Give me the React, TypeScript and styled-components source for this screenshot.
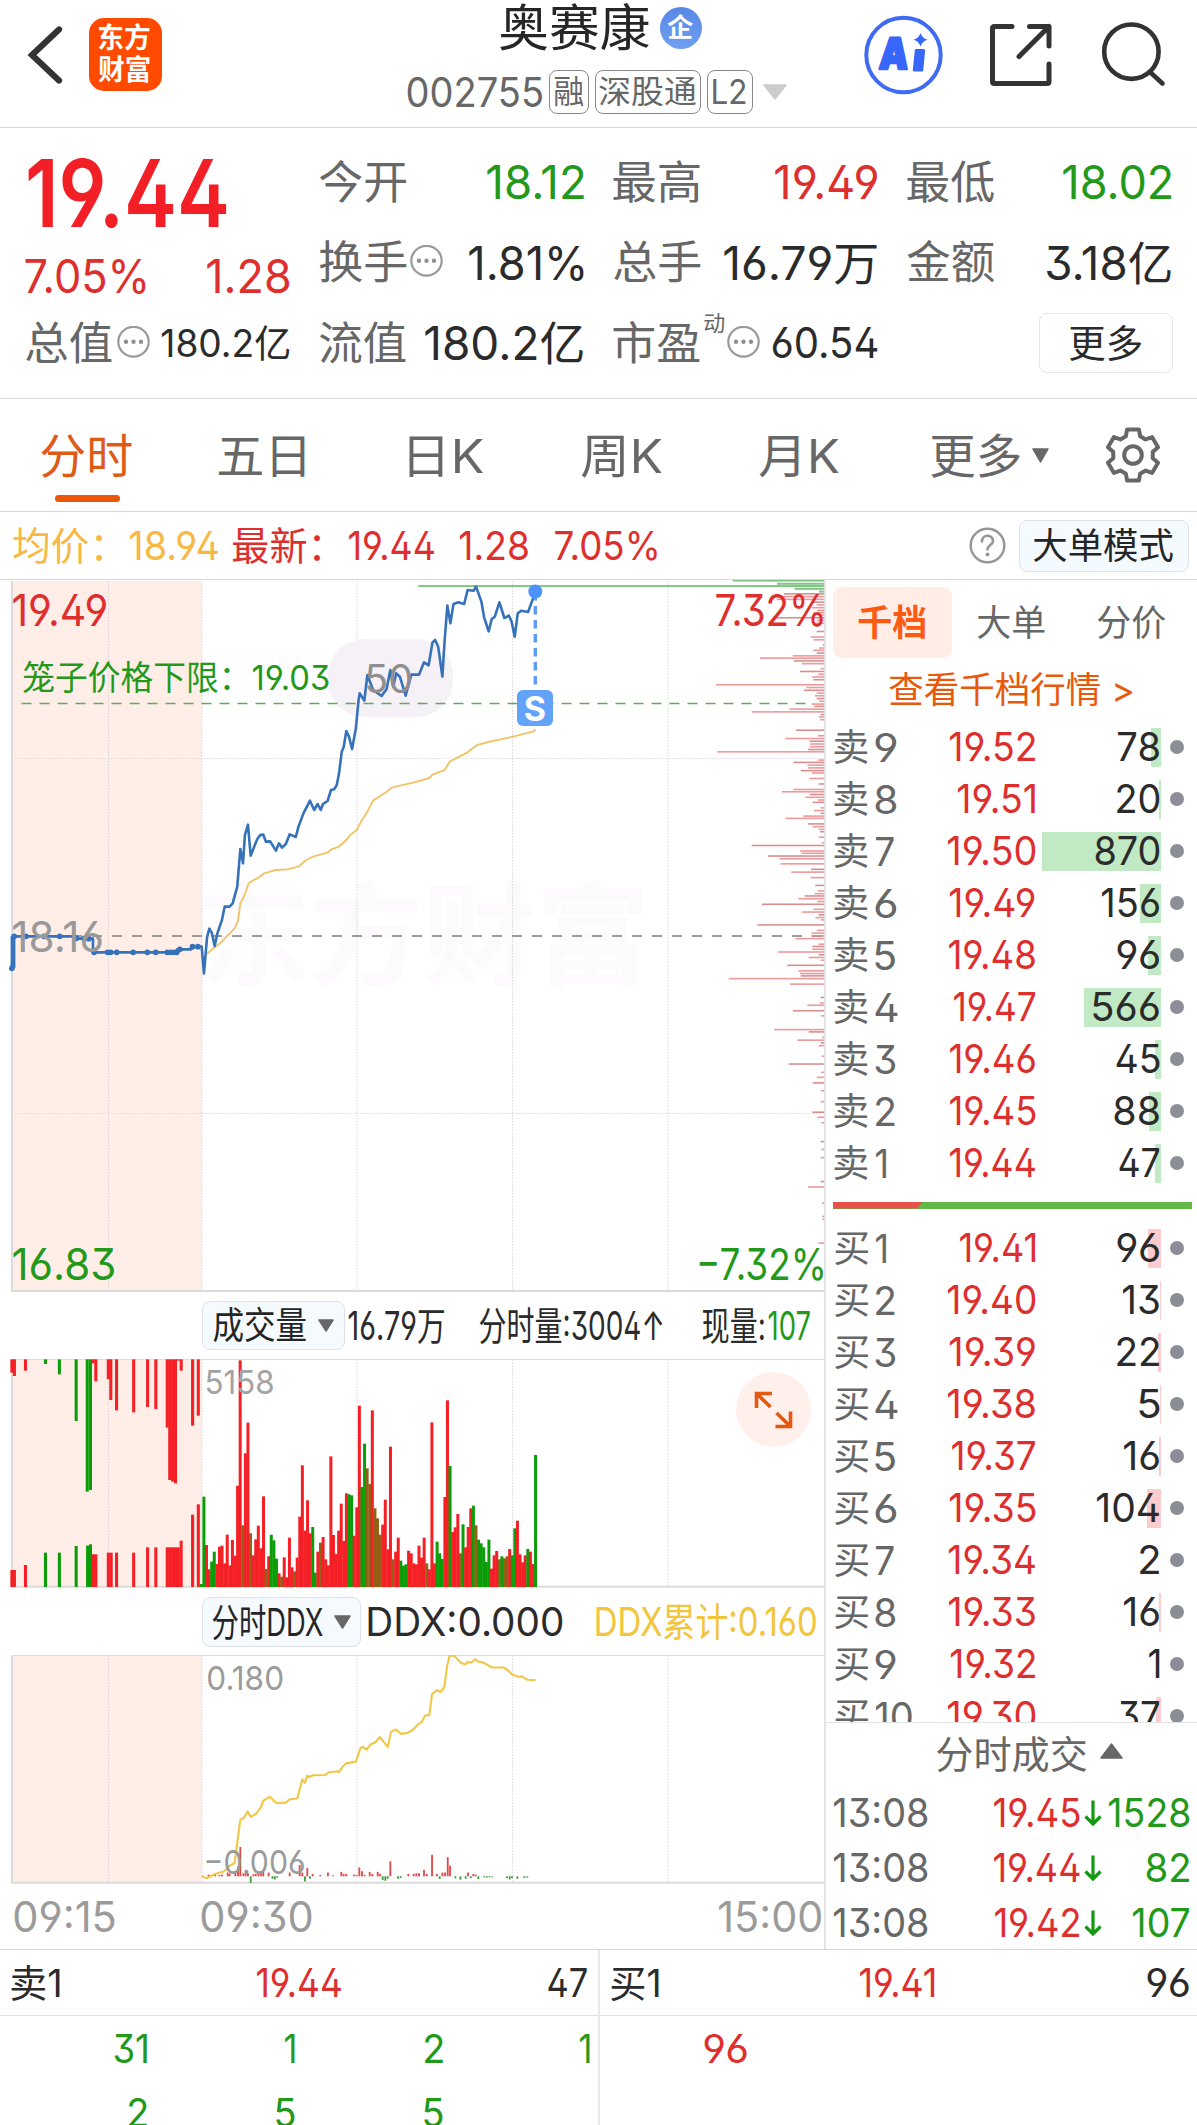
import React, { useLayoutEffect, useRef, useState } from 'react';
import styled, { createGlobalStyle, css } from 'styled-components';

const FONT = 'Inter, "Noto Sans CJK SC", sans-serif';
const C = {
  red: '#de2f2f',
  green: '#22991a',
  text: '#2b2b2b',
  sub: '#666766',
  mute: '#9b9b9b',
  line: '#d6d7d9',
  orange: '#e8590c',
  blue: '#3672ba',
  pink: '#ffeee7',
};

const Global = createGlobalStyle`
  * { box-sizing: border-box; }
  html, body { margin: 0; padding: 0; background: #fff; }
  body { font-family: ${FONT}; width: 1197px; height: 2125px; overflow: hidden; }
`;

/* ---------- text fitted to a fixed ink width ---------- */
const FitBox = styled.span<{ $w: number; $size: number; $ml: number; $color?: string; $weight: number }>`
  display: block;
  flex: none;
  width: ${p => p.$w}px;
  height: ${p => p.$size}px;
  margin-left: ${p => p.$ml}px;
  font-family: ${FONT};
  font-size: ${p => p.$size}px;
  line-height: ${p => p.$size}px;
  font-weight: ${p => p.$weight};
  font-feature-settings: 'ss01' 1;
  text-align: left;
  ${p => p.$color && css`color: ${p.$color};`}
`;
const FitInner = styled.span`
  display: inline-block;
  white-space: nowrap;
  transform-origin: 0 0;
  vertical-align: top;
`;

let ctx: CanvasRenderingContext2D | null = null;
function inkOf(text: string, size: number, weight: number) {
  if (!ctx) ctx = document.createElement('canvas').getContext('2d');
  if (!ctx) return { left: 0, width: text.length * size * 0.6, advance: text.length * size * 0.6 };
  ctx.font = `${weight} ${size}px ${FONT}`;
  const m = ctx.measureText(text);
  return {
    left: -m.actualBoundingBoxLeft,
    width: m.actualBoundingBoxRight + m.actualBoundingBoxLeft,
    advance: m.width,
  };
}

type FitProps = { t: string; w: number; s: number; ml?: number; c?: string; b?: number };
function Fit({ t, w, s, ml = 0, c, b = 400 }: FitProps) {
  const ref = useRef<HTMLSpanElement>(null);
  const [fit, setFit] = useState({ k: 1, dx: 0 });
  useLayoutEffect(() => {
    const el = ref.current;
    if (!el) return;
    const ink = inkOf(t, s, b);
    const kept = el.style.transform;
    el.style.transform = 'none';
    const advance = el.getBoundingClientRect().width;
    el.style.transform = kept;
    /* alternate digits change the advance, so the ink width follows it */
    const k = w / (ink.width + advance - ink.advance);
    setFit({ k, dx: -ink.left * k - 0.7 });
  }, [t, w, s, b]);
  return (
    <FitBox $w={w} $size={s} $ml={ml} $color={c} $weight={b}>
      <FitInner ref={ref} style={{ transform: `translateX(${fit.dx.toFixed(2)}px) scaleX(${fit.k.toFixed(4)})` }}>{t}</FitInner>
    </FitBox>
  );
}

/* ---------- page ---------- */
const Page = styled.div`
  width: 1197px;
  height: 2125px;
  overflow: hidden;
  background: #fff;
  color: ${C.text};
  display: flex;
  flex-direction: column;
`;

/* ---------- header ---------- */
const Header = styled.header`
  display: flex;
  flex: none;
  height: 128px;
  border-bottom: 1px solid ${C.line};
`;
const Icon = styled.svg<{ $ml?: number; $mt?: number }>`
  display: block;
  flex: none;
  margin-left: ${p => p.$ml ?? 0}px;
  margin-top: ${p => p.$mt ?? 0}px;
`;
const Logo = styled.div`
  width: 73px;
  height: 73px;
  margin: 18px 0 0 23px;
  padding: 6px 0 0 10px;
  border-radius: 15px;
  background: #ff4a00;
  display: flex;
  flex-direction: column;
  gap: 4px;
`;
const Identity = styled.div`
  width: 382px;
  margin-left: 245px;
  display: flex;
  flex-direction: column;
`;
const NameRow = styled.div`
  display: flex;
  align-items: center;
  height: 56px;
`;
const Verified = styled.div`
  width: 42px;
  height: 42px;
  margin-left: 10px;
  border-radius: 50%;
  background: linear-gradient(#5687e6, #709ff1);
  display: flex;
  align-items: center;
  justify-content: center;
`;
const CodeRow = styled.div`
  display: flex;
  align-items: center;
  height: 44px;
  margin-top: 14px;
  color: ${C.sub};
`;
const Tag = styled.div<{ $w: number }>`
  width: ${p => p.$w}px;
  height: 44px;
  margin-left: 6px;
  border: 1.5px solid #8d8888;
  border-radius: 8px;
  display: flex;
  align-items: center;
  justify-content: center;
`;

/* ---------- quote ---------- */
const Quote = styled.section`
  display: grid;
  flex: none;
  grid-template-columns: repeat(4, 264px);
  grid-template-rows: repeat(3, 80.5px);
  column-gap: 30px;
  height: 271px;
  padding: 14px 0 0 26.4px;
  border-bottom: 1px solid ${C.line};
`;
const Lead = styled.div`
  grid-row: span 2;
  padding-top: 5px;
  display: flex;
  flex-direction: column;
  gap: 12px;
`;
const Spread = styled.div`
  display: flex;
  justify-content: space-between;
`;
const Stat = styled.div`
  display: flex;
  align-items: center;
`;
const Push = styled.div`
  margin-left: auto;
`;
const Sup = styled.div`
  align-self: flex-start;
  margin: 9px 0 0 4px;
`;
const MoreButton = styled.button`
  width: 134px;
  height: 60px;
  margin: 0 -0.6px 0 auto;
  padding: 0;
  border: 1.5px solid #e6e6e8;
  border-radius: 8px;
  background: #fff;
  display: flex;
  align-items: center;
  justify-content: center;
`;

/* ---------- tabs ---------- */
const Tabs = styled.nav`
  display: flex;
  flex: none;
  height: 113px;
  align-items: center;
  border-bottom: 1px solid ${C.line};
  color: ${C.sub};
`;
const ActiveTab = styled.div`
  height: 112px;
  margin-left: 42px;
  padding-top: 32.5px;
  display: flex;
  flex-direction: column;
  align-items: center;
  gap: 16px;
`;
const Underline = styled.div`
  width: 65px;
  height: 7px;
  border-radius: 4px;
  background: #ea560b;
`;
const InfoBar = styled.div`
  display: flex;
  flex: none;
  align-items: center;
  height: 68px;
  border-bottom: 1px solid ${C.line};
`;
const Pill = styled.button<{ $w: number; $h: number; $ml: number; $pl: number }>`
  width: ${p => p.$w}px;
  height: ${p => p.$h}px;
  margin: 0 0 0 ${p => p.$ml}px;
  padding: 0 0 0 ${p => p.$pl}px;
  border: 1.5px solid #dfe2ea;
  border-radius: 8px;
  background: #f5faff;
  color: #252525;
  display: flex;
  flex: none;
  align-items: center;
`;

/* ---------- body ---------- */
const Body = styled.main`
  display: flex;
  flex: none;
  height: 1370px;
  border-bottom: 1px solid ${C.line};
`;
const ChartColumn = styled.div`
  width: 826px;
  flex: none;
  border-right: 2px solid #e4e4e8;
  display: flex;
  flex-direction: column;
`;
const ChartBox = styled.div<{ $h: number }>`
  position: relative;
  flex: none;
  height: ${p => p.$h}px;
`;
const Plot = styled.svg`
  display: block;
`;
const Overlay = styled.div<{ $x: number; $y: number }>`
  position: absolute;
  left: ${p => p.$x}px;
  top: ${p => p.$y}px;
`;
const IndicatorBar = styled.div<{ $h: number }>`
  display: flex;
  flex: none;
  align-items: center;
  height: ${p => p.$h}px;
`;
const Expand = styled.button`
  position: absolute;
  left: 736px;
  top: 13px;
  width: 75px;
  height: 75px;
  padding: 0;
  border: 0;
  border-radius: 50%;
  background: #fff0eb;
`;
const TimeAxis = styled.div`
  display: flex;
  flex: 1;
  align-items: center;
  color: ${C.mute};
`;

/* ---------- order book ---------- */
const Book = styled.aside`
  width: 371px;
  display: flex;
  flex-direction: column;
`;
const BookTabs = styled.div`
  display: flex;
  flex: none;
  align-items: center;
  height: 71px;
  margin-top: 7px;
  padding-left: 7px;
  color: ${C.sub};
`;
const BookTabOn = styled.div`
  width: 119px;
  height: 71px;
  border-radius: 9px;
  background: #ffede6;
  display: flex;
  align-items: center;
  justify-content: center;
`;
const DepthLink = styled.div`
  display: flex;
  flex: none;
  align-items: center;
  height: 63px;
  padding-left: 63.5px;
`;
const Levels = styled.div<{ $h: number }>`
  flex: none;
  height: ${p => p.$h}px;
  overflow: hidden;
`;
const Level = styled.div`
  display: grid;
  grid-template-columns: 100px 100.5px 125.5px 1fr;
  align-items: center;
  height: 52px;
  padding-left: 9px;
`;
const LevelName = styled.div`
  display: flex;
  align-items: center;
  color: ${C.sub};
`;
const Right = styled.div`
  display: flex;
  justify-content: flex-end;
`;
const Amount = styled.div<{ $bar: number; $tone: string }>`
  display: flex;
  align-items: center;
  justify-content: flex-end;
  height: 39px;
  padding-right: 1px;
  background: linear-gradient(${p => p.$tone}, ${p => p.$tone}) right / ${p => p.$bar}px 100% no-repeat;
`;
const Dot = styled.div`
  width: 14px;
  height: 14px;
  margin-left: 8.5px;
  border-radius: 50%;
  background: #8b8d97;
`;
const Ratio = styled.div`
  flex: none;
  height: 6.5px;
  margin: 13px 5.5px 13.5px 6.5px;
  background: #60b947;
`;
const RatioRed = styled.div`
  width: 90px;
  height: 100%;
  background: #e94f4b;
  clip-path: polygon(0 0, 100% 0, 94% 100%, 0 100%);
`;
const DealsHead = styled.div`
  display: flex;
  flex: none;
  align-items: center;
  height: 63px;
  padding-left: 111px;
  border-top: 1px solid #e2e3e6;
  color: ${C.sub};
`;
const Deal = styled.div`
  display: flex;
  flex: none;
  align-items: center;
  height: 55.3px;
  padding: 0 7px 0 7.5px;
`;

/* ---------- queue ---------- */
const Queue = styled.section`
  display: flex;
  flex: 1;
`;
const Side = styled.div<{ $first?: boolean }>`
  width: ${p => (p.$first ? 600 : 597)}px;
  border-right: ${p => (p.$first ? '2px solid #e9e9ec' : '0')};
`;
const QueueHead = styled.div`
  display: flex;
  align-items: center;
  height: 66px;
  border-bottom: 1.5px solid #e1e1e4;
`;
const QueueRow = styled.div`
  display: grid;
  grid-template-columns: repeat(4, 147.7px);
  align-items: center;
  height: 64px;
`;

/* ---------- data ---------- */
const PRICE =
  '31,805 36,709 200,709 205,716 243,716 243,757 460,757 463,748 500,748 503,740 527,740 533,820 541,712 547,686 553,697 561,738 568,700 580,660 587,620 600,620 608,610 620,560 628,447 635,490 640,405 648,374 655,467 672,418 680,405 688,404 695,425 706,424 721,452 729,430 737,443 747,432 757,403 773,411 780,380 793,340 810,302 821,330 830,312 838,330 844,312 856,303 865,270 873,268 880,255 886,220 893,155 898,142 905,93 912,110 920,147 930,85 937,0 940,-20 952,2 960,-75 975,-30 985,-22 997,-12 1010,-32 1020,-90 1028,-40 1035,-80 1045,-70 1060,-13 1075,-76 1095,-76 1108,-113 1120,-104 1130,-172 1137,-180 1145,-160 1156,-70 1162,-180 1169,-283 1177,-230 1185,-288 1198,-293 1213,-288 1222,-330 1238,-328 1244,-340 1258,-295 1265,-248 1277,-206 1285,-243 1293,-250 1305,-293 1318,-246 1330,-253 1337,-235 1345,-190 1353,-260 1362,-268 1380,-264 1392,-302 1399,-325';
const AVERAGE =
  '541,761 561,742 575,730 592,710 613,685 622,662 628,610 638,588 650,549 675,533 690,520 720,510 750,508 780,500 800,480 818,470 856,458 866,448 885,440 905,420 915,405 932,390 945,362 960,335 975,302 1010,276 1023,263 1080,248 1122,234 1130,224 1162,210 1175,185 1222,157 1245,136 1275,126 1330,113 1395,94 1399,88';
const TICKS: [number, number][] = [
  [31, 805], [37, 709], [68, 709], [115, 709], [156, 709], [200, 715], [220, 716], [232, 716], [246, 757], [281, 757], [289, 757],
  [305, 757], [348, 757], [385, 757], [407, 757], [437, 757], [446, 757], [455, 757], [462, 757], [470, 748], [503, 740], [517, 740],
];
/* traded volume by price: y, bar start */
const PROFILE =
  '52,1152 58,1145 64,1130 70,1236 76,1250 82,1236 88,1252 93,1240 98,1256 104,1120 110,1250 116,1240 134,1250 146,1232 152,1240 163,1268 170,1257 175,1240 181,1250 187,1178 192,1080 198,1182 204,1206 215,1262 221,1200 227,1255 233,1237 239,1240 250,948 256,1219 262,1212 268,1250 274,1245 280,1250 286,1257 292,1235 297,1243 303,1168 309,1055 315,1262 320,1257 326,1260 349,1188 361,1254 367,1156 373,1228 379,1230 385,1230 391,1224 396,952 414,1254 419,1180 425,1222 431,1224 437,1202 442,1236 454,1228 466,1256 478,1180 483,1146 489,1230 495,1216 501,1254 506,1238 518,1262 524,1242 530,1262 536,1210 541,1157 553,1224 559,1238 565,1256 570,1260 582,1256 594,1266 600,1055 612,1200 617,1205 623,1104 629,1138 640,1142 652,1233 658,1174 670,1232 687,1246 699,1254 705,1244 710,1214 716,1195 722,1252 728,1086 739,1240 745,1206 751,1256 757,1246 762,1262 773,1072 785,1250 791,1234 797,1234 803,1186 815,1256 820,1237 826,1237 832,1134 838,1256 844,1226 850,1262 861,1162 873,1195 879,1200 884,1202 890,986 902,1170 931,1262 943,1260 948,1222 960,1179 971,1263 1001,1122 1006,1226 1018,1266 1024,1192 1030,1262 1036,1256 1059,1265 1076,1166 1094,1263 1105,1250 1117,1238 1134,1262 1158,1262 1181,1237 1192,1252 1204,1264 1245,1262 1262,1264 1280,1262 1332,1262 1344,1224 1379,1266 1408,1267 1414,1267 1466,1255';
const PROFILE_TOP = '23,998 30,1131 35,55 41,1184 47,1257';
/* minute volume from 09:30: tone + bar top */
const VOLUME =
  'g912 g650 r795 r868 g845 g815 r852 r800 r797 r850 r764 r856 r780 r827 r617 r241 b736 r520 r428 b760 r826 r778 r737 r805 r649 b867 r829 g764 g781 g836 r880 b890 r832 r892 r773 r862 b874 r833 r710 r556 r752 r661 r760 g741 g878 r815 b788 r771 r838 r856 r529 r765 r822 r752 r671 r783 r640 g643 g646 r767 r682 r377 g621 g491 b565 b612 r391 b685 b715 b764 r734 r659 r808 r500 b838 r815 r773 g842 g857 g853 r812 r820 r850 r853 r797 r833 r773 b850 r868 r427 r850 g785 g820 g837 r651 r361 g558 r756 r742 r702 b820 g733 r802 r741 r685 g677 b736 g779 g790 g802 g846 g779 r866 r826 r813 b838 g829 b835 b829 r807 g826 g745 r722 r823 r847 r826 g807 r815 r852 g525';
const AUCTION_TOP =
  'r33,278 r40,288 r71,272 g127,252 g166,283 g213,423 g244,635 g253,630 r261,250 r268,304 r303,298 r310,360 r326,391 r374,397 r413,381 r436,387 r468,443 r475,600 r483,605 r491,610 r499,242 r507,272 r539,437 r555,407';
const AUCTION_LOW =
  'r33,870 r40,870 r71,855 g127,818 g166,818 g213,798 g245,797 g253,793 r261,823 r268,823 r303,818 r311,818 r326,818 r374,818 r413,802 r436,802 r468,802 r475,802 r483,802 r491,802 r499,802 r507,782 r539,704 r555,673';
const DDX =
  '527,838 540,845 560,833 585,825 600,808 613,800 620,740 628,673 637,668 647,649 655,665 670,655 682,636 688,617 705,606 722,624 748,623 757,613 777,611 790,555 797,565 803,544 808,548 818,543 850,542 860,534 880,531 886,534 895,518 905,508 930,503 942,463 948,460 958,468 968,453 980,447 993,431 1013,460 1022,415 1035,409 1047,421 1062,420 1078,411 1092,394 1101,388 1111,368 1122,366 1129,305 1142,293 1151,299 1161,285 1168,225 1175,192 1187,193 1205,214 1217,218 1222,211 1230,213 1243,203 1250,210 1262,212 1285,227 1315,227 1325,233 1337,246 1352,254 1365,254 1378,263 1399,264';
const DDX_BARS =
  '545,834 562,834 573,835 580,834 595,828 600,832 615,828 622,810 628,753 636,830 642,828 648,830 655,858 662,833 668,832 675,830 682,830 688,826 702,828 712,846 718,848 724,843 757,828 783,806 790,828 797,854 803,815 810,846 817,832 837,835 857,828 870,836 892,826 898,832 905,832 925,834 932,835 939,813 946,824 953,835 966,826 973,832 987,826 993,832 1000,850 1007,852 1013,846 1020,795 1040,846 1047,844 1067,832 1081,832 1088,830 1095,830 1108,820 1115,832 1129,776 1142,832 1149,847 1156,828 1163,828 1170,783 1176,808 1190,845 1203,849 1217,846 1223,828 1230,844 1237,832 1243,834 1250,847 1265,842 1272,843 1279,842 1286,842 1325,844 1332,848 1338,844 1352,846 1370,844 1378,843';

const pairs = (s: string) => s.split(' ').map(p => p.split(',').map(Number) as [number, number]);
const TONE: Record<string, string> = { r: '#f42025', g: '#0b9d08', b: '#926016' };

type Row = [string, number, string, number, string, number, number];
const SELLS: Row[] = [
  ['9', 21, '19.52', 86, '78', 42, 10],
  ['8', 21, '19.51', 77.5, '20', 42, 2],
  ['7', 19, '19.50', 88, '870', 64, 119],
  ['6', 21, '19.49', 85.5, '156', 58, 21],
  ['5', 20, '19.48', 87, '96', 42, 13],
  ['4', 22, '19.47', 82, '566', 66, 77],
  ['3', 20, '19.46', 86, '45', 43, 6],
  ['2', 19, '19.45', 86, '88', 45, 12],
  ['1', 11, '19.44', 86, '47', 40, 6],
];
const BUYS: Row[] = [
  ['1', 11, '19.41', 76, '96', 42, 13],
  ['2', 19, '19.40', 88, '13', 37, 1],
  ['3', 20, '19.39', 86, '22', 42, 3],
  ['4', 22, '19.38', 88, '5', 20, 1],
  ['5', 20, '19.37', 84, '16', 36, 2],
  ['6', 21, '19.35', 86, '104', 63, 14],
  ['7', 19, '19.34', 87, '2', 19, 0],
  ['8', 20, '19.33', 87, '16', 36, 2],
  ['9', 20, '19.32', 85, '1', 11, 0],
  ['10', 37, '19.30', 88, '37', 40, 5],
];

/* ---------- small pieces ---------- */
const Dots = ({ ml = 3 }: { ml?: number }) => (
  <Icon $ml={ml} width="33" height="35" viewBox="0 0 33 35">
    <ellipse cx="16.5" cy="15.7" rx="15.2" ry="14.9" fill="none" stroke="#9a9a9a" strokeWidth="2.2" />
    {[9, 16.5, 24].map(x => (
      <circle key={x} cx={x} cy="15.7" r="2.2" fill="#8f8f8f" />
    ))}
  </Icon>
);

const Tri = ({ w, h, ml, c, up, mt }: { w: number; h: number; ml: number; c: string; up?: boolean; mt?: number }) => (
  <Icon $ml={ml} $mt={mt} width={w} height={h} viewBox={`0 0 ${w} ${h}`}>
    <path d={up ? `M1 ${h - 1}H${w - 1}L${w / 2} 1Z` : `M1 1H${w - 1}L${w / 2} ${h - 1}Z`} fill={c} stroke={c} strokeWidth="1.5" strokeLinejoin="round" />
  </Icon>
);

function gearPath() {
  const pts: string[] = [];
  for (let i = 0; i < 6; i++) {
    const base = -90 + i * 60;
    [[-21, 20], [-13, 26.2], [13, 26.2], [21, 20]].forEach(([a, r]) => {
      const t = ((base + a) * Math.PI) / 180;
      pts.push(`${(29 + r * Math.cos(t)).toFixed(2)} ${(29 + r * Math.sin(t)).toFixed(2)}`);
    });
  }
  return `M${pts.join('L')}Z`;
}

const Grid = ({ top, bottom }: { top: number; bottom: number }) => (
  <>
    <rect x="12" y={top} width="190" height={bottom - top} fill={C.pink} />
    {[108.5, 202, 357, 512.5, 668].map(x => (
      <line key={x} x1={x} x2={x} y1={top} y2={bottom} stroke="#d9d5d8" strokeWidth="1" strokeDasharray="1.5 1.5" />
    ))}
    <line x1="12" x2="12" y1={top} y2={bottom} stroke="#dcdade" strokeWidth="2" />
    <line x1="11" x2="824" y1={bottom} y2={bottom} stroke="#dddadc" strokeWidth="2" />
  </>
);

function LevelList({ rows, side, tone, h }: { rows: Row[]; side: string; tone: string; h: number }) {
  return (
    <Levels $h={h}>
      {rows.map(([n, nw, price, pw, amount, aw, bar]) => (
        <Level key={n}>
          <LevelName>
            <Fit t={side} w={34} s={37} />
            <Fit t={n} w={nw} s={39} ml={6.5} />
          </LevelName>
          <Right>
            <Fit t={price} w={pw} s={40} c={C.red} />
          </Right>
          <Amount $bar={bar} $tone={tone}>
            <Fit t={amount} w={aw} s={40} c={C.text} />
          </Amount>
          <Dot />
        </Level>
      ))}
    </Levels>
  );
}

function PriceChart() {
  return (
    <ChartBox $h={712}>
      <Overlay $x={203} $y={300}>
        <Fit t="东方财富" w={440} s={112} c="#fdfafe" b={700} />
      </Overlay>
      <Overlay $x={0} $y={0}>
        <Plot width="824" height="712" viewBox="0 580 824 712">
          <Grid top={581} bottom={1291} />
          <line x1="12" x2="824" y1="758.5" y2="758.5" stroke="#dedcde" strokeDasharray="1.5 1.5" />
          <line x1="12" x2="824" y1="1113.5" y2="1113.5" stroke="#dedcde" strokeDasharray="1.5 1.5" />
          <rect x="328" y="639" width="125" height="78" rx="37" fill="#f5f1f6" />
          <line x1="21.5" x2="810" y1="703.5" y2="703.5" stroke="#62a961" strokeWidth="1.5" strokeDasharray="10 8" />
          <line x1="12" x2="824" y1="936" y2="936" stroke="#7d7d7d" strokeWidth="1.6" strokeDasharray="10 10" />
          {pairs(PROFILE).map(([y, x], i) => (
            <rect key={i} x={400 + x / 3} y={569.2 + y / 2.178} width={424 - x / 3} height="1.6" fill={i % 3 ? '#ee9a9c' : '#d8908f'} />
          ))}
          {pairs(PROFILE_TOP).map(([y, x], i) => (
            <rect key={i} x={400 + x / 3} y={569 + y / 2.178} width={424 - x / 3} height="2" fill="#80c584" />
          ))}
          <g transform="translate(0 700) scale(0.38268 0.33333)" fill="none" strokeLinejoin="round">
            <polyline points={AVERAGE} stroke="#f0c468" strokeWidth="1.9" vectorEffect="non-scaling-stroke" />
            <polyline points={PRICE} stroke={C.blue} strokeWidth="2.6" vectorEffect="non-scaling-stroke" />
            <path d="M31 805V709M37 805V709" stroke={C.blue} strokeWidth="2.5" vectorEffect="non-scaling-stroke" />
            {TICKS.map(([x, y]) => (
              <ellipse key={`${x}-${y}`} cx={x} cy={y} rx="7.5" ry="8.7" fill={C.blue} />
            ))}
          </g>
          <line x1="535.3" x2="535.3" y1="592" y2="686" stroke="#5f9bf6" strokeWidth="3.4" strokeDasharray="8.5 5.5" />
          <circle cx="535.3" cy="591.5" r="7" fill="#4c93fb" />
          <rect x="517" y="690" width="36" height="36" rx="6" fill="#62a2fb" />
          <text x="535" y="720.5" textAnchor="middle" fontFamily={FONT} fontWeight="700" fontSize="34" fill="#fff">S</text>
        </Plot>
      </Overlay>
      <Overlay $x={13.5} $y={7.5}><Fit t="19.49" w={93} s={44} c={C.red} /></Overlay>
      <Overlay $x={716.5} $y={7.5}><Fit t="7.32%" w={107} s={44} c={C.red} /></Overlay>
      <Overlay $x={13.5} $y={662}><Fit t="16.83" w={101} s={44} c={C.green} /></Overlay>
      <Overlay $x={700} $y={662}><Fit t="−7.32%" w={124} s={44} c={C.green} /></Overlay>
      <Overlay $x={14} $y={335}><Fit t="18.16" w={89} s={43} c="#999999" /></Overlay>
      <Overlay $x={23.7} $y={81}><Fit t="笼子价格下限：19.03" w={305} s={34} c={C.green} /></Overlay>
      <Overlay $x={368} $y={79}><Fit t="50" w={44} s={39} c="#8f8f8f" /></Overlay>
    </ChartBox>
  );
}

function VolumeChart() {
  return (
    <ChartBox $h={229}>
      <Plot width="824" height="229" viewBox="0 1359 824 229">
        <Grid top={1359.5} bottom={1586.7} />
        <line x1="12" x2="824" y1="1359.5" y2="1359.5" stroke="#dedcde" />
        <g transform="translate(0 1280) scale(0.35714 0.33333)">
          {AUCTION_TOP.split(' ').map(s => {
            const [x, y] = s.slice(1).split(',').map(Number);
            return <rect key={s} x={x - 4} y={238} width={8.6} height={y - 238} fill={TONE[s[0]]} />;
          })}
          {AUCTION_LOW.split(' ').map(s => {
            const [x, y] = s.slice(1).split(',').map(Number);
            return <rect key={s} x={x - 4} y={y} width={8.6} height={921 - y} fill={TONE[s[0]]} />;
          })}
          {VOLUME.split(' ').map((s, i) => {
            const x = 563.5 + i * 7.255;
            const y = Number(s.slice(1));
            return <rect key={i} x={x - 4} y={y} width={8.4} height={921 - y} fill={TONE[s[0]]} />;
          })}
        </g>
      </Plot>
      <Overlay $x={207} $y={7}><Fit t="5158" w={67} s={33} c="#a3a3a3" /></Overlay>
      <Expand aria-label="expand">
        <Icon width="75" height="75" viewBox="0 0 75 75" fill="none" stroke="#e4590f" strokeWidth="3.6">
          <path d="M36 21.5H20.5V36M20.5 21.5L34.5 35" />
          <path d="M39.5 54.5H54.5V39.5M54.5 54.5L40.5 41" />
        </Icon>
      </Expand>
    </ChartBox>
  );
}

function DdxChart() {
  return (
    <ChartBox $h={229}>
      <Plot width="824" height="229" viewBox="0 1655 824 229">
        <Grid top={1655.5} bottom={1882.7} />
        <line x1="12" x2="824" y1="1655.5" y2="1655.5" stroke="#dedcde" />
        <g transform="translate(0 1590) scale(0.38268 0.34124)">
          {pairs(DDX_BARS).map(([x, y]) => (
            <rect key={x} x={x - 2.4} y={Math.min(y, 839)} width={4.8} height={Math.abs(839 - y)} fill={y < 839 ? '#e24a4a' : '#3b9d3b'} />
          ))}
          <polyline points={DDX} fill="none" stroke="#f1c745" strokeWidth="2.1" strokeLinejoin="round" vectorEffect="non-scaling-stroke" />
        </g>
      </Plot>
      <Overlay $x={207.5} $y={7}><Fit t="0.180" w={75} s={33} c="#9b9b9b" /></Overlay>
      <Overlay $x={207} $y={191}><Fit t="−0.006" w={98} s={33} c="#9b9b9b" /></Overlay>
    </ChartBox>
  );
}

export default function App() {
  return (
    <Page lang="zh-CN">
      <Global />
      <Header>
        <Icon $ml={26} $mt={24} width="40" height="62" viewBox="26 24 40 62" fill="none" stroke="#333" strokeWidth="6.2" strokeLinecap="round" strokeLinejoin="miter">
          <path d="M59 29.5L32 55L59 80.5" />
        </Icon>
        <Logo>
          <Fit t="东方" w={51.5} s={28} c="#fff" b={700} />
          <Fit t="财富" w={52} s={28} c="#fff" b={700} />
        </Logo>
        <Identity>
          <NameRow>
            <Fit t="奥赛康" w={150} s={50} ml={93} c="#262626" />
            <Verified><Fit t="企" w={26} s={26} c="#fff" b={700} /></Verified>
          </NameRow>
          <CodeRow>
            <Fit t="002755" w={135} s={41} ml={1} />
            <Tag $w={40}><Fit t="融" w={29} s={32} /></Tag>
            <Tag $w={106}><Fit t="深股通" w={96.5} s={32} /></Tag>
            <Tag $w={46}><Fit t="L2" w={33.5} s={34} /></Tag>
            <Tri w={24} h={16} ml={10} c="#cccccc" />
          </CodeRow>
        </Identity>
        <Icon $ml={74} $mt={14} width="82" height="82" viewBox="863 14 82 82">
          <circle cx="903.5" cy="55" r="37.2" fill="none" stroke="#3f6bf3" strokeWidth="4" />
          <text transform="translate(893 69) skewX(-4)" textAnchor="middle" fontFamily={FONT} fontWeight="900" fontSize="43" textLength="29" lengthAdjust="spacingAndGlyphs" fill="#3767fa" stroke="#3767fa" strokeWidth="2.6" strokeLinejoin="round">A</text>
          <path d="M916.3 50.5H923.6L921.8 70H914.3Z" fill="#3767fa" stroke="#3767fa" strokeWidth="3" strokeLinejoin="round" />
          <path d="M920.5 33Q922 38 927.5 39.7Q922 41.4 920.5 46.5Q919 41.4 913.5 39.7Q919 38 920.5 33Z" fill="#3767fa" />
        </Icon>
        <Icon $ml={43} $mt={21} width="68" height="68" viewBox="988 21 68 68" fill="none" stroke="#333" strokeWidth="5" strokeLinecap="round" strokeLinejoin="round">
          <path d="M1012 26.5H994.5Q992.5 26.5 992.5 28.5V81.5Q992.5 83.5 994.5 83.5H1047Q1049 83.5 1049 81.5V64" />
          <path d="M1029.5 26.5H1049V46M1049 26.5L1019 56.5" />
        </Icon>
        <Icon $ml={42} $mt={18} width="72" height="72" viewBox="1098 18 72 72" fill="none" stroke="#333" strokeWidth="4.6" strokeLinecap="round">
          <circle cx="1131.4" cy="51.7" r="27.2" />
          <path d="M1150.5 72.5L1162.5 83.5" />
        </Icon>
      </Header>

      <Quote>
        <Lead>
          <Fit t="19.44" w={198} s={93.5} ml={2.5} c="#f22026" b={600} />
          <Spread>
            <Fit t="7.05%" w={120} s={46} c={C.red} />
            <Fit t="1.28" w={82} s={46} c={C.red} />
          </Spread>
        </Lead>
        <Stat><Fit t="今开" w={87} s={45} c={C.sub} /><Push><Fit t="18.12" w={96.5} s={46} c={C.green} /></Push></Stat>
        <Stat><Fit t="最高" w={87} s={45} c={C.sub} /><Push><Fit t="19.49" w={102} s={46} c={C.red} /></Push></Stat>
        <Stat><Fit t="最低" w={87} s={45} c={C.sub} /><Push><Fit t="18.02" w={108} s={46} c={C.green} /></Push></Stat>
        <Stat><Fit t="换手" w={87} s={45} c={C.sub} /><Dots /><Push><Fit t="1.81%" w={114} s={46} /></Push></Stat>
        <Stat><Fit t="总手" w={87} s={45} c={C.sub} /><Push><Fit t="16.79万" w={153} s={46} /></Push></Stat>
        <Stat><Fit t="金额" w={87} s={45} c={C.sub} /><Push><Fit t="3.18亿" w={125} s={46} /></Push></Stat>
        <Stat><Fit t="总值" w={87} s={45} c={C.sub} /><Dots ml={4} /><Push><Fit t="180.2亿" w={128} s={38} /></Push></Stat>
        <Stat><Fit t="流值" w={87} s={45} c={C.sub} /><Push><Fit t="180.2亿" w={158} s={46} /></Push></Stat>
        <Stat><Fit t="市盈" w={87} s={45} c={C.sub} /><Sup><Fit t="动" w={20} s={22} c={C.sub} /></Sup><Dots ml={2} /><Push><Fit t="60.54" w={105} s={42} /></Push></Stat>
        <Stat><MoreButton><Fit t="更多" w={72} s={38} c={C.text} /></MoreButton></Stat>
      </Quote>

      <Tabs>
        <ActiveTab><Fit t="分时" w={91} s={47} c="#dd5a17" /><Underline /></ActiveTab>
        <Fit t="五日" w={87} s={47} ml={86} />
        <Fit t="日K" w={74.5} s={47} ml={103.5} />
        <Fit t="周K" w={81} s={47} ml={98} />
        <Fit t="月K" w={80} s={47} ml={97} />
        <Fit t="更多" w={89} s={47} ml={92} />
        <Tri w={17} h={15} ml={11} c={C.sub} />
        <Icon $ml={55} width="58" height="58" viewBox="0 0 58 58" fill="none" stroke={C.sub} strokeWidth="4" strokeLinejoin="round">
          <path d={gearPath()} />
          <circle cx="29" cy="29" r="8.8" />
        </Icon>
      </Tabs>

      <InfoBar>
        <Fit t="均价：" w={89} s={39} ml={14} c="#f8b944" />
        <Fit t="18.94" w={89} s={40} ml={27} c="#f8b944" />
        <Fit t="最新：" w={88} s={39} ml={13.5} c={C.red} />
        <Fit t="19.44" w={86} s={40} ml={28} c={C.red} />
        <Fit t="1.28" w={69} s={40} ml={25} c={C.red} />
        <Fit t="7.05%" w={102.5} s={40} ml={26} c={C.red} />
        <Icon $ml={311.5} width="37" height="37" viewBox="0 0 37 37">
          <circle cx="18.5" cy="18.5" r="16.8" fill="none" stroke="#969696" strokeWidth="2.4" />
          <path d="M13 14.5C13 7 24 7 24 14C24 18 18.5 18 18.5 22.5" fill="none" stroke="#969696" strokeWidth="2.6" strokeLinecap="round" />
          <circle cx="18.5" cy="27.5" r="1.9" fill="#969696" />
        </Icon>
        <Pill $w={170} $h={52} $ml={13} $pl={14}><Fit t="大单模式" w={139.5} s={36} /></Pill>
      </InfoBar>

      <Body>
        <ChartColumn>
          <PriceChart />
          <IndicatorBar $h={67}>
            <Pill $w={143} $h={49} $ml={202} $pl={11}>
              <Fit t="成交量" w={93} s={37} />
              <Tri w={16} h={13} ml={11} c={C.sub} />
            </Pill>
            <Fit t="16.79万" w={96} s={39} ml={4} />
            <Fit t="分时量:3004↑" w={183} s={39} ml={34.5} />
            <Fit t="现量:" w={62} s={39} ml={40.5} />
            <Fit t="107" w={42} s={39} ml={4} c={C.green} />
          </IndicatorBar>
          <VolumeChart />
          <IndicatorBar $h={67}>
            <Pill $w={159} $h={50} $ml={202} $pl={10}>
              <Fit t="分时DDX" w={110.5} s={38} />
              <Tri w={17} h={14} ml={10} c={C.sub} />
            </Pill>
            <Fit t="DDX:0.000" w={194.5} s={39} ml={7.5} />
            <Fit t="DDX累计:0.160" w={220} s={39} ml={34} c="#f2c53c" />
          </IndicatorBar>
          <DdxChart />
          <TimeAxis>
            <Fit t="09:15" w={101} s={42} ml={14.5} />
            <Fit t="09:30" w={110} s={42} ml={86} />
            <Fit t="15:00" w={102.5} s={42} ml={407} />
          </TimeAxis>
        </ChartColumn>

        <Book>
          <BookTabs>
            <BookTabOn><Fit t="千档" w={68} s={36} c="#fa5a12" b={700} /></BookTabOn>
            <Fit t="大单" w={68} s={36} ml={26} />
            <Fit t="分价" w={68} s={36} ml={52} />
          </BookTabs>
          <DepthLink>
            <Fit t="查看千档行情" w={211} s={36} c={C.orange} />
            <Fit t=">" w={17} s={36} ml={15} c={C.orange} />
          </DepthLink>
          <LevelList rows={SELLS} side="卖" tone="#c1e9c4" h={468} />
          <Ratio><RatioRed /></Ratio>
          <LevelList rows={BUYS} side="买" tone="#fbcbcd" h={500} />
          <DealsHead>
            <Fit t="分时成交" w={150.5} s={38} />
            <Tri w={23} h={16} ml={12} c={C.sub} up mt={-6} />
          </DealsHead>
          {([['19.45', 86, '1528', 81.5], ['19.44', 86.5, '82', 43], ['19.42', 85, '107', 57]] as [string, number, string, number][]).map(([p, pw, v, vw]) => (
            <Deal key={p}>
              <Fit t="13:08" w={94.5} s={40} c={C.sub} />
              <Fit t={p} w={pw} s={40} ml={152 - pw} c={C.red} />
              <Icon $ml={4} width="18" height="28" viewBox="0 0 18 28" fill="none" stroke="#12990f" strokeWidth="3.2">
                <path d="M9 1.5V25M1.5 17.5L9 25L16.5 17.5" />
              </Icon>
              <Push><Fit t={v} w={vw} s={40} c={C.green} /></Push>
            </Deal>
          ))}
        </Book>
      </Body>

      <Queue>
        <Side $first>
          <QueueHead>
            <Fit t="卖1" w={49} s={38} ml={11.5} />
            <Fit t="19.44" w={84.5} s={39} ml={196} c={C.red} />
            <Fit t="47" w={39} s={39} ml={208} />
          </QueueHead>
          <QueueRow>
            <Right><Fit t="31" w={33} s={39} c={C.green} /></Right>
            <Right><Fit t="1" w={10.5} s={39} c={C.green} /></Right>
            <Right><Fit t="2" w={18.5} s={39} c={C.green} /></Right>
            <Right><Fit t="1" w={10.5} s={39} c={C.green} /></Right>
          </QueueRow>
          <QueueRow>
            <Right><Fit t="2" w={18.5} s={39} c={C.green} /></Right>
            <Right><Fit t="5" w={18.5} s={39} c={C.green} /></Right>
            <Right><Fit t="5" w={18.5} s={39} c={C.green} /></Right>
          </QueueRow>
        </Side>
        <Side>
          <QueueHead>
            <Fit t="买1" w={48} s={38} ml={11.5} />
            <Fit t="19.41" w={75.5} s={39} ml={200} c={C.red} />
            <Fit t="96" w={41.5} s={39} ml={213} />
          </QueueHead>
          <QueueRow>
            <Right><Fit t="96" w={42.5} s={39} c={C.red} /></Right>
          </QueueRow>
        </Side>
      </Queue>
    </Page>
  );
}
